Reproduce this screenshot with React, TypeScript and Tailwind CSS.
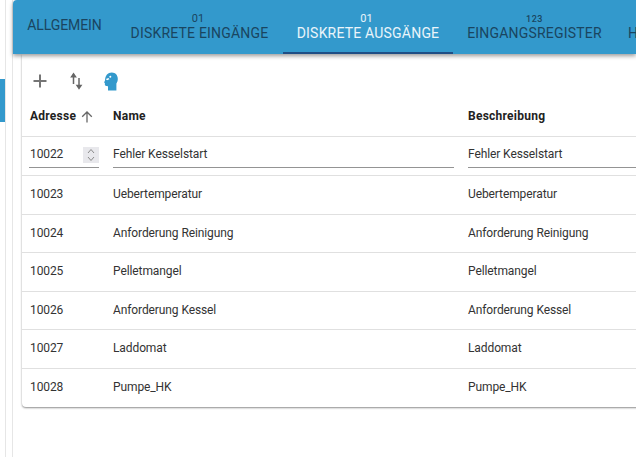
import React from "react";

const rows = [
  { id: "10023", name: "Uebertemperatur" },
  { id: "10024", name: "Anforderung Reinigung" },
  { id: "10025", name: "Pelletmangel" },
  { id: "10026", name: "Anforderung Kessel" },
  { id: "10027", name: "Laddomat" },
  { id: "10028", name: "Pumpe_HK" },
];

const Tab = ({ label, top, active, width, topClass, labelClass }: { label: string; top?: string; active?: boolean; width: string; topClass?: string; labelClass?: string }) => (
  <div className={`${width} relative h-full shrink-0 flex flex-col items-center ${top ? "pt-[14px]" : "pt-[17px]"} ${active ? "text-white/90" : "text-[#1a4560]"}`}>
    {top && <div className={`h-[11px] leading-[10px] ${topClass ?? "text-[11px] -ml-[3px]"}`}>{top}</div>}
    <div className={`text-[14px] leading-[16px] whitespace-nowrap ${labelClass ?? "tracking-[0.2px]"}`}>{label}</div>
    {active && <div className="absolute left-0 right-0 bottom-0 h-[2px] bg-[#1f4e85]" />}
  </div>
);

const App: React.FC = () => {
  return (
    <div className="w-[636px] h-[457px] overflow-hidden bg-white flex font-['Roboto',sans-serif] text-[#222]">
      <div className="w-[6px] h-full shrink-0 border-r border-[#e6e6e6] pt-[79px]">
        <div className="w-[5px] h-[43px] bg-[#3399cc]" />
      </div>
      <div className="w-[7px] h-full shrink-0 border-r border-[#e6e6e6]" />
      <div className="flex-1 min-w-0">
        <div className="h-[54px] bg-[#3399cc] rounded-tl-[4px] flex overflow-hidden shadow-[0_2px_4px_rgba(0,0,0,0.4)] relative z-10">
          <Tab label="ALLGEMEIN" width="w-[103px]" labelClass="tracking-[-0.1px]" />
          <Tab label="DISKRETE EINGÄNGE" top="01" width="w-[167px]" />
          <Tab label="DISKRETE AUSGÄNGE" top="01" active width="w-[170px]" />
          <Tab label="EINGANGSREGISTER" top="123" topClass="text-[9px] font-medium tracking-[0.5px]" width="w-[163px]" />
          <Tab label="HOLDINGREGISTER" top="123" topClass="text-[9px] font-medium tracking-[0.5px]" width="w-[150px]" />
        </div>
        <div className="ml-[9px] w-[620px] rounded-b-[4px] shadow-[0_1px_2px_rgba(0,0,0,0.45)] bg-white overflow-hidden">
          <div className="h-[46px] flex items-center pl-[8px] pt-[8px] gap-[15px]">
            <div className="w-[20px] h-[20px] flex items-center justify-center">
              <svg width="20" height="20" viewBox="0 0 20 20" fill="none" stroke="#757575" strokeWidth="2">
                <path d="M10 3.500v13M3.500 10h13" />
              </svg>
            </div>
            <div className="w-[22px] h-[22px] flex items-center justify-center">
              <svg width="18" height="20" viewBox="0 0 18 20" fill="none" stroke="#666" strokeWidth="1.500">
                <path d="M6.500 13V3.500" />
                <path d="M4.500 5.800 6.500 2.800 8.500 5.800z" fill="#666" />
                <path d="M12 7v10" />
                <path d="M10 14.400l2 3 2-3z" fill="#666" />
              </svg>
            </div>
            <div className="w-[22px] h-[22px] -ml-[2px] flex items-center justify-center">
              <svg width="14" height="19" viewBox="0 0 14 19">
                <path d="M4 18.500V14.300C2.800 13.900 1.800 13.900 1.200 13.500 .7 13.100 .9 12 .9 11.200L.2 10.600C.2 9.900 .8 9.300 1 8.500 1.200 3.600 3.800 .6 7.800 .6c3.700 0 6 2.800 6 6.400 0 1.900-.6 3.300-1.400 4.600v6.900z" fill="#3399cc" />
                <path d="M1.800 7.100 4.500 6 5.400 7.200 3 8.300z" fill="#fff" />
                <circle cx="6.300" cy="4.700" r="1" fill="#fff" />
              </svg>
            </div>
          </div>
          <div className="h-[37px] pb-[4px] flex items-center border-b border-[#e0e0e0] text-[12px] font-bold tracking-[0.25px] text-[#222]">
            <div className="w-[91px] pl-[8px] flex items-center shrink-0">
              <span>Adresse</span>
              <svg width="12" height="12" viewBox="0 0 12 12" fill="none" stroke="#666" strokeWidth="1.300" className="ml-[5px] mt-[1px]">
                <path d="M6 11.500V1M1.200 5.800 6 1l4.800 4.800" />
              </svg>
            </div>
            <div className="w-[355px] shrink-0">Name</div>
            <div className="flex-1">Beschreibung</div>
          </div>
          <div className="h-[39px] flex items-start border-b border-[#e0e0e0] text-[12px] tracking-[-0.1px] text-[#333]">
            <div className="w-[91px] shrink-0 pl-[7px] pr-[14px]">
              <div className="h-[31px] border-b border-[#949494] flex items-center justify-between pl-[1px] pt-[6px]">
                <span className="-mt-[2px]">10022</span>
                <div className="w-[16px] h-[16px] bg-[#e8e8ec] flex items-center justify-center">
                  <svg width="8" height="14" viewBox="0 0 8 14" fill="none" stroke="#8a8a8a" strokeWidth="1">
                    <path d="M1 5 4 1.500 7 5M1 9l3 3.500L7 9" />
                  </svg>
                </div>
              </div>
            </div>
            <div className="w-[355px] shrink-0 pr-[14px]">
              <div className="h-[31px] border-b border-[#949494] flex items-center pt-[4px]">Fehler Kesselstart</div>
            </div>
            <div className="flex-1">
              <div className="h-[31px] border-b border-[#949494] flex items-center pt-[4px]">Fehler Kesselstart</div>
            </div>
          </div>
          {rows.map((r, i) => (
            <div key={r.id} className={`h-[38.5px] pb-[1px] flex items-center text-[12px] tracking-[-0.1px] text-[#333] ${i < rows.length - 1 ? "border-b border-[#e0e0e0]" : ""}`}>
              <div className="w-[91px] shrink-0 pl-[8px]">{r.id}</div>
              <div className="w-[355px] shrink-0">{r.name}</div>
              <div className="flex-1">{r.name}</div>
            </div>
          ))}
        </div>
      </div>
    </div>
  );
};

export default App;
